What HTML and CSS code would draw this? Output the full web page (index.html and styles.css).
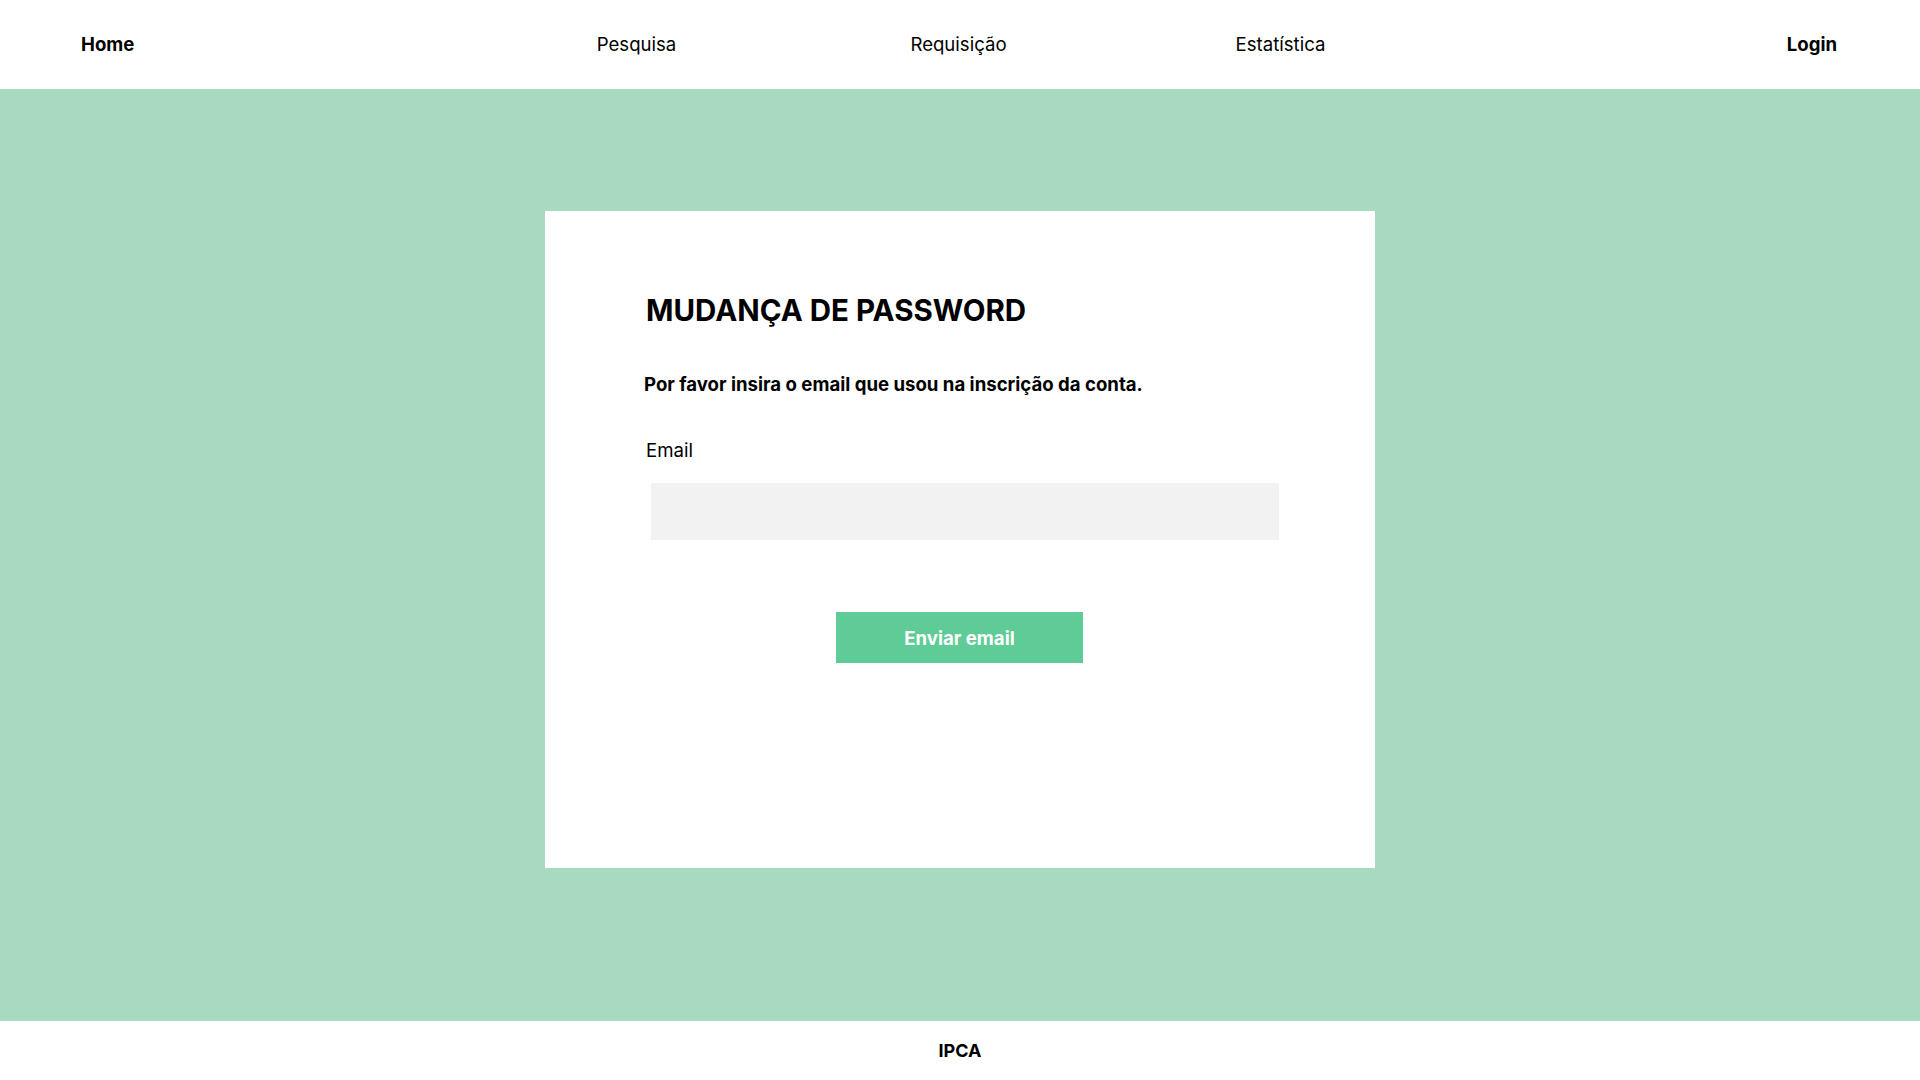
FILE: index.html
```html
<!DOCTYPE html>
<html lang="pt">
<head>
<meta charset="utf-8">
<title>Mudança de Password</title>
<link rel="stylesheet" href="styles.css">
</head>
<body>
<header class="topbar">
  <a class="nav-home" href="#">Home</a>
  <nav class="nav-main">
    <a class="nav-link" href="#">Pesquisa</a>
    <a class="nav-link" href="#">Requisição</a>
    <a class="nav-link" href="#">Estatística</a>
  </nav>
  <a class="nav-login" href="#">Login</a>
</header>
<main class="stage">
  <section class="card">
    <h1 class="card-title">MUDANÇA DE PASSWORD</h1>
    <p class="card-text">Por favor insira o email que usou na inscrição da conta.</p>
    <label class="field-label" for="email">Email</label>
    <input class="field-input" id="email" type="email">
    <div class="actions">
      <button class="btn-send" type="button">Enviar email</button>
    </div>
  </section>
</main>
<footer class="footer">IPCA</footer>
</body>
</html>
```
FILE: styles.css
```css
* { box-sizing: border-box; }
html, body { margin: 0; padding: 0; }
body {
  font-family: Inter, "Liberation Sans", Arial, sans-serif;
  color: #000;
  background: #fff;
  width: 1920px;
  height: 1080px;
  display: flex;
  flex-direction: column;
}
a { color: #000; text-decoration: none; }

.topbar {
  height: 89px;
  flex: 0 0 89px;
  display: flex;
  align-items: center;
  padding: 0 83px 2px 81px;
  background: #fff;
  font-size: 18.6px;
  line-height: 24px;
}
.nav-home, .nav-login { font-weight: 700; }
.nav-main {
  flex: 1;
  display: flex;
  justify-content: center;
  margin-right: 4px;
}
.nav-link {
  width: 322px;
  text-align: center;
  font-weight: 400;
}

.stage {
  flex: 0 0 932px;
  background: #a8d9c1;
  display: flex;
  justify-content: center;
  align-items: flex-start;
  padding-top: 122px;
}
.card {
  width: 830px;
  height: 657px;
  background: #fff;
  padding: 81px 96px 0 101px;
  display: flex;
  flex-direction: column;
  align-items: flex-start;
}
.card-title {
  margin: 0;
  font-size: 29.5px;
  line-height: 36px;
  font-weight: 700;
}
.card-text {
  margin: 44px 0 0 -2px;
  font-size: 18.6px;
  line-height: 24px;
  font-weight: 700;
}
.field-label {
  margin-top: 42px;
  font-size: 18.6px;
  line-height: 24px;
  font-weight: 400;
}
.field-input {
  margin: 21px 0 0 5px;
  width: 628px;
  height: 57px;
  border: 0;
  background: #f2f2f2;
  outline: none;
  font: inherit;
}
.actions {
  align-self: stretch;
  margin-top: 72px;
  display: flex;
  justify-content: center;
  padding-right: 6px;
}
.btn-send {
  width: 247px;
  height: 51px;
  border: 0;
  background: #5fcb96;
  color: #fff;
  font-family: inherit;
  font-size: 18.6px;
  font-weight: 700;
  cursor: pointer;
}

.footer {
  flex: 1;
  display: flex;
  align-items: center;
  justify-content: center;
  font-size: 18px;
  font-weight: 700;
  background: #fff;
}
```
